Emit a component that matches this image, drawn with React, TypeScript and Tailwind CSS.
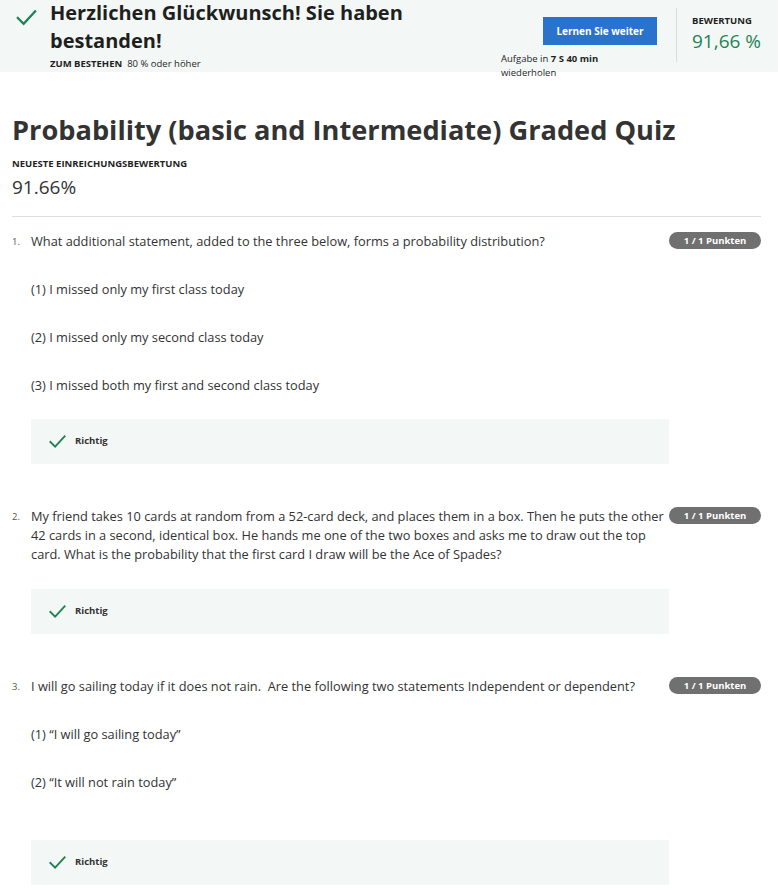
import React from "react";

const font = { fontFamily: '"Open Sans", "Noto Sans", sans-serif' };

function Check({ className }: { className?: string }) {
  return (
    <svg viewBox="0 0 24 24" className={className} fill="none" stroke="#1f8354" strokeWidth="2.4" strokeLinecap="square">
      <path d="M3 12.5 L9 18.5 L21 5.5" />
    </svg>
  );
}

function Badge() {
  return (
    <div className="w-[92px] shrink-0 flex">
      <div className="w-[92px] h-[17px] rounded-full bg-[#707070] text-white text-[9.5px] font-bold flex items-center justify-center leading-none">
        1 / 1 Punkten
      </div>
    </div>
  );
}

function Richtig({ mt }: { mt: string }) {
  return (
    <div className={`${mt} h-[45px] bg-[#f3f8f6] flex items-center pl-[17px]`}>
      <Check className="w-[19px] h-[19px]" />
      <span className="ml-[8px] text-[9.5px] font-bold text-[#333]">Richtig</span>
    </div>
  );
}

function Question({
  n,
  children,
  options,
  boxMt,
  mt,
}: {
  n: number;
  children: React.ReactNode;
  options: string[];
  boxMt: string;
  mt: string;
}) {
  return (
    <div className={`flex items-start ${mt}`}>
      <div className="w-[19px] shrink-0 text-[9.5px] leading-[19px] text-[#555]">{n}.</div>
      <div className="flex-1 min-w-0">
        <div className="text-[12.8px] leading-[19px] text-[#333]">{children}</div>
        {options.map((o, i) => (
          <div key={i} className="mt-[29px] text-[12.8px] leading-[19px] text-[#333]">
            {o}
          </div>
        ))}
        <Richtig mt={boxMt} />
      </div>
      <Badge />
    </div>
  );
}

export default function App() {
  return (
    <div style={font} className="w-[778px] min-h-[894px] bg-white text-[#333] overflow-hidden">
      {/* Banner */}
      <div className="h-[72px] bg-[#f3f8f6] flex">
        <div className="pl-[15px] pt-[6px] w-[23px] box-content shrink-0">
          <Check className="w-[23px] h-[23px]" />
        </div>
        <div className="ml-[12px] w-[360px] shrink-0">
          <div className="-mt-[1px] text-[20px] font-bold leading-[28px] text-[#1f1f1f]">
            Herzlichen Glückwunsch! Sie haben bestanden!
          </div>
          <div className="mt-[3px] text-[9.5px] leading-[12px] text-[#1f1f1f]">
            <span className="font-bold">ZUM BESTEHEN</span>
            <span className="ml-[5px]">80 % oder höher</span>
          </div>
        </div>
        <div className="ml-[91px] w-[156px] shrink-0 pt-[17px]">
          <div className="flex justify-end">
            <div className="w-[114px] h-[28px] bg-[#2a73cc] text-white text-[10px] font-bold flex items-center justify-center">
              Lernen Sie weiter
            </div>
          </div>
          <div className="mt-[7px] text-[9.5px] leading-[14px] text-[#1f1f1f]">
            Aufgabe in <span className="font-bold">7 S 40 min</span>
            <br />
            wiederholen
          </div>
        </div>
        <div className="ml-[19px] mt-[8px] w-px h-[54px] bg-[#dcdcdc]" />
        <div className="pl-[15px] pt-[15px]">
          <div className="text-[9.5px] font-bold leading-[12px] text-[#1f1f1f]">BEWERTUNG</div>
          <div className="mt-[2px] text-[19px] leading-[24px] text-[#1f8354]">91,66 %</div>
        </div>
      </div>

      {/* Content */}
      <div className="pl-[12px] pr-[17px]">
        <h1 className="mt-[39px] text-[27.2px] font-bold leading-[37px] text-[#333] whitespace-nowrap">
          Probability (basic and Intermediate) Graded Quiz
        </h1>
        <div className="mt-[10px] text-[9.5px] font-bold leading-[12px] text-[#1f1f1f]">
          NEUESTE EINREICHUNGSBEWERTUNG
        </div>
        <div className="mt-[4px] text-[19px] leading-[26px] text-[#333]">91.66%</div>
        <div className="mt-[16px] h-px bg-[#dedede]" />

        <Question
          n={1}
          mt="mt-[15px]"
          options={[
            "(1) I missed only my first class today",
            "(2) I missed only my second class today",
            "(3) I missed both my first and second class today",
          ]}
          boxMt="mt-[24px]"
        >
          What additional statement, added to the three below, forms a probability distribution?
        </Question>

        <Question n={2} mt="mt-[43px]" options={[]} boxMt="mt-[25px]">
          My friend takes 10 cards at random from a 52-card deck, and places them in a box. Then he puts the other
          42 cards in a second, identical box. He hands me one of the two boxes and asks me to draw out the top
          card. What is the probability that the first card I draw will be the Ace of Spades?
        </Question>

        <Question
          n={3}
          mt="mt-[43px]"
          options={["(1) “I will go sailing today”", "(2) “It will not rain today”"]}
          boxMt="mt-[48px]"
        >
          I will go sailing today if it does not rain.&nbsp; Are the following two statements Independent or dependent?
        </Question>
      </div>
    </div>
  );
}
